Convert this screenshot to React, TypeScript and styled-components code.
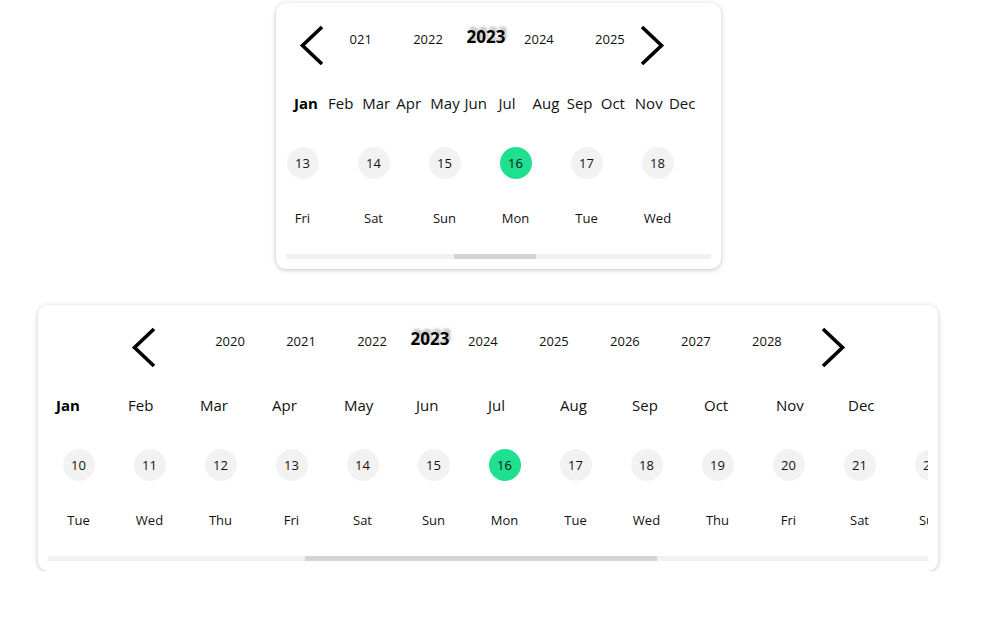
import React, { useLayoutEffect, useRef, useState } from "react";
import styled, { createGlobalStyle } from "styled-components";

const GlobalStyle = createGlobalStyle`
  html, body { margin: 0; padding: 0; background: #ffffff; }
  body { font-family: "Open Sans", "Noto Sans", sans-serif; color: #111; }
`;

const Page = styled.div`
  display: flex;
  flex-direction: column;
  align-items: flex-start;
  gap: 36px;
  padding-top: 3px;
`;

const Card = styled.div<{ $left: number; $width: number }>`
  box-sizing: border-box;
  margin-left: ${(p) => p.$left}px;
  width: ${(p) => p.$width}px;
  height: 266px;
  padding: 10px;
  background: #fff;
  border-radius: 10px;
  box-shadow: 0 1px 5px rgba(0, 0, 0, 0.24);
  display: flex;
  flex-direction: column;
`;

const YearRow = styled.div<{ $pad: number }>`
  display: flex;
  align-items: flex-start;
  margin-top: 12px;
  padding-left: ${(p) => p.$pad}px;
  height: 40px;
`;

const NavButton = styled.button`
  all: unset;
  flex: 0 0 auto;
  width: 26px;
  height: 40px;
  display: block;
  cursor: pointer;
  svg { display: block; }
`;

const YearViewport = styled.div<{ $width: number }>`
  flex: 0 0 auto;
  width: ${(p) => p.$width}px;
  margin: 0 8px 0 24px;
  overflow: hidden;
  height: 40px;
`;

const YearStrip = styled.div<{ $offset: number }>`
  display: flex;
  align-items: flex-start;
  margin-left: ${(p) => p.$offset}px;
  width: max-content;
`;

const Year = styled.div<{ $active?: boolean }>`
  flex: 0 0 auto;
  box-sizing: border-box;
  width: ${(p) => (p.$active ? "auto" : "71px")};
  padding: ${(p) => (p.$active ? "2px 0 0 3px" : "4px 0 0")};
  margin-right: ${(p) => (p.$active ? "-2px" : "0")};
  text-align: center;
  line-height: 20px;
  font-size: ${(p) => (p.$active ? "17px" : "13px")};
  font-weight: ${(p) => (p.$active ? 700 : 400)};
  color: ${(p) => (p.$active ? "#000" : "#111")};
  text-shadow: ${(p) => (p.$active ? "2px -3px 3px rgba(0,0,0,0.3)" : "none")};
`;

const MonthRow = styled.div`
  display: grid;
  grid-template-columns: repeat(12, minmax(0, 1fr));
  padding: 0 8px;
  margin-top: 28px;
  height: 20px;
`;

const Month = styled.div<{ $active?: boolean }>`
  font-size: 15px;
  line-height: 20px;
  white-space: nowrap;
  font-weight: ${(p) => (p.$active ? 700 : 400)};
  color: ${(p) => (p.$active ? "#000" : "#111")};
`;

const DayArea = styled.div`
  margin-top: 24px;
  display: flex;
  flex-direction: column;
`;

const DayScroller = styled.div`
  display: flex;
  overflow-x: auto;
  overflow-y: hidden;
  padding-top: 10px;
  scrollbar-width: none;
  &::-webkit-scrollbar { display: none; }
`;

const ScrollTrack = styled.div`
  position: relative;
  height: 5px;
  background: #f1f1f1;
`;

const ScrollThumb = styled.div`
  position: absolute;
  top: 0;
  bottom: 0;
  background: #d4d4d4;
`;

const DayCell = styled.div`
  flex: 0 0 71px;
  display: flex;
  flex-direction: column;
  align-items: center;
  padding-bottom: 27px;
`;

const DayCircle = styled.div<{ $active?: boolean }>`
  width: 32px;
  height: 32px;
  border-radius: 50%;
  display: flex;
  align-items: center;
  justify-content: center;
  font-size: 13px;
  color: #111;
  background: ${(p) => (p.$active ? "#1fe08e" : "#f2f2f2")};
`;

const DayName = styled.div`
  margin-top: 30px;
  font-size: 13px;
  line-height: 18px;
  color: #111;
`;

const MONTHS = ["Jan", "Feb", "Mar", "Apr", "May", "Jun", "Jul", "Aug", "Sep", "Oct", "Nov", "Dec"];
const WEEK = ["Sun", "Mon", "Tue", "Wed", "Thu", "Fri", "Sat"];
const FIRST_YEAR = 2019;
const YEARS = Array.from({ length: 11 }, (_, i) => FIRST_YEAR + i);
const DAYS = Array.from({ length: 31 }, (_, i) => i + 1);

const Chevron: React.FC<{ dir: "left" | "right" }> = ({ dir }) => (
  <svg width="26" height="40" viewBox="0 0 26 40">
    <path
      d={dir === "left" ? "M23 2 L3.5 20.5 L23 39" : "M3 2 L22.5 20.5 L3 39"}
      fill="none"
      stroke="#000"
      strokeWidth="3.6"
    />
  </svg>
);

const Picker: React.FC<{
  left: number;
  width: number;
  navPad: number;
  viewport: number;
  activeStart: number;
}> = ({ left, width, navPad, viewport, activeStart }) => {
  const ref = useRef<HTMLDivElement>(null);
  const [thumb, setThumb] = useState({ left: 0, width: 0 });
  useLayoutEffect(() => {
    const el = ref.current;
    if (!el) return;
    el.scrollLeft = 1083.5 - el.clientWidth / 2;
    const update = () => {
      const cw = el.clientWidth;
      const sw = el.scrollWidth;
      const tw = (cw * cw) / sw;
      const max = sw - cw;
      const tl = max > 0 ? (el.scrollLeft / max) * (cw - tw) : 0;
      setThumb({ left: tl, width: tw });
    };
    update();
    el.addEventListener("scroll", update);
    return () => el.removeEventListener("scroll", update);
  }, []);
  const offset = activeStart - (2023 - FIRST_YEAR) * 71;
  return (
    <Card $left={left} $width={width}>
      <YearRow $pad={navPad}>
        <NavButton aria-label="previous">
          <Chevron dir="left" />
        </NavButton>
        <YearViewport $width={viewport}>
          <YearStrip $offset={offset}>
            {YEARS.map((y) => (
              <Year key={y} $active={y === 2023}>
                {y}
              </Year>
            ))}
          </YearStrip>
        </YearViewport>
        <NavButton aria-label="next">
          <Chevron dir="right" />
        </NavButton>
      </YearRow>
      <MonthRow>
        {MONTHS.map((m, i) => (
          <Month key={m} $active={i === 0}>
            {m}
          </Month>
        ))}
      </MonthRow>
      <DayArea>
        <DayScroller ref={ref}>
          {DAYS.map((d) => (
            <DayCell key={d}>
              <DayCircle $active={d === 16}>{d}</DayCircle>
              <DayName>{WEEK[(d - 1) % 7]}</DayName>
            </DayCell>
          ))}
        </DayScroller>
        <ScrollTrack>
          <ScrollThumb style={{ left: thumb.left, width: thumb.width }} />
        </ScrollTrack>
      </DayArea>
    </Card>
  );
};

export default function App() {
  return (
    <>
      <GlobalStyle />
      <Page>
        <Picker left={276} width={445} navPad={13} viewport={282} activeStart={114.5} />
        <Picker left={38} width={900} navPad={83} viewport={631} activeStart={226.5} />
      </Page>
    </>
  );
}
